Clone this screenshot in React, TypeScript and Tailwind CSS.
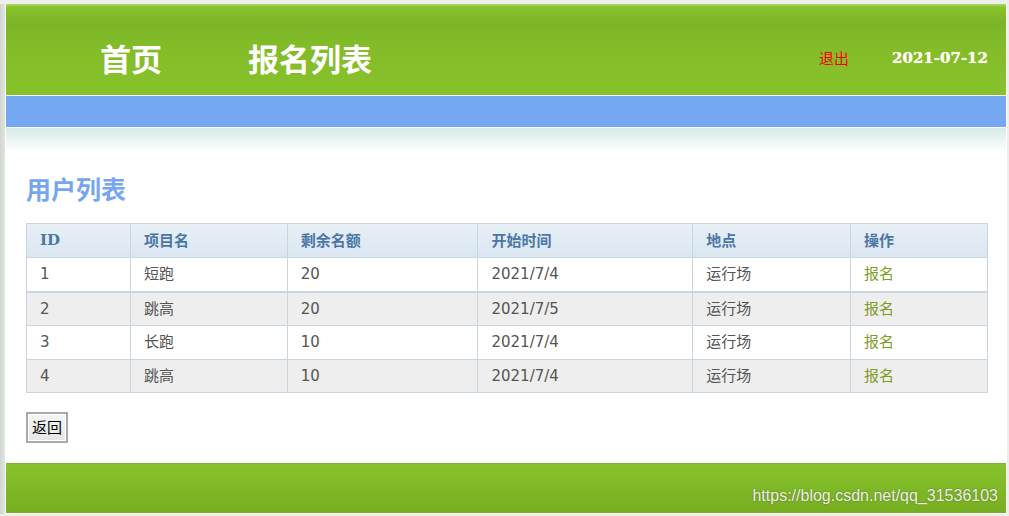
const rows = [
  { id: 1, name: "短跑", left: 20, start: "2021/7/4", place: "运行场" },
  { id: 2, name: "跳高", left: 20, start: "2021/7/5", place: "运行场" },
  { id: 3, name: "长跑", left: 10, start: "2021/7/4", place: "运行场" },
  { id: 4, name: "跳高", left: 10, start: "2021/7/4", place: "运行场" },
];

const cjk = "font-['Noto_Sans_CJK_SC',sans-serif]";
const body = "font-['DejaVu_Sans','Noto_Sans_CJK_SC',sans-serif]";

export default function App() {
  return (
    <div className="w-[1009px] h-[516px] bg-[#eeeeee] pt-[4px] pr-[2px] pb-[2px] flex overflow-hidden">
      {/* left frame */}
      <div className="w-[6px] bg-gradient-to-r from-[#cfd5cf] to-[#e2e5e1]" />
      <div className="flex-1 flex flex-col bg-white border-l border-r border-b border-white">
        {/* header */}
        <div className="h-[91px] flex items-center pt-[15px] pl-[94px] pr-[18px] bg-[linear-gradient(to_bottom,#b2d873_0px,#8ac42c_3px,#83bc29_10px,#7bb427_20px,#82bb28_38px,#88c22a_91px)]">
          <nav className={`flex items-center gap-[86px] text-white font-bold text-[31px] leading-none ${cjk}`}>
            <span>首页</span>
            <span>报名列表</span>
          </nav>
          <div className="ml-auto flex items-center gap-[43px] pt-[2px]">
            <span className={`text-[15px] text-[#ff0000] ${cjk}`}>退出</span>
            <span className="text-[15px] font-bold text-white font-['DejaVu_Serif',serif] [text-shadow:0_0_1px_#f5f0a0]">2021-07-12</span>
          </div>
        </div>
        <div className="h-[1px] bg-white" />
        <div className="h-[31px] bg-[#76a7f3]" />
        <div className="h-[1px] bg-white" />
        <div className="h-[24px] bg-gradient-to-b from-[#d7ebe8] to-white" />

        {/* content */}
        <div className="pl-[20px] pr-[18px]">
          <h2 className={`mt-[21px] h-[32px] leading-[30px] text-[25px] font-bold text-[#78a6ee] ${cjk}`}>用户列表</h2>
          <table className={`mt-[18px] w-[962px] border-collapse text-[15px] ${body}`}>
            <colgroup>
              <col className="w-[104px]" />
              <col className="w-[157px]" />
              <col className="w-[191px]" />
              <col className="w-[215px]" />
              <col className="w-[158px]" />
              <col className="w-[137px]" />
            </colgroup>
            <thead>
              <tr className="h-[34px] bg-gradient-to-b from-[#e9f0f6] to-[#dae6f1] text-[#4b77a6] font-bold">
                <th className="border border-[#c9d5e0] text-left pl-[13px] font-['DejaVu_Serif',serif]">ID</th>
                {["项目名", "剩余名额", "开始时间", "地点", "操作"].map((h) => (
                  <th key={h} className={`border border-[#c9d5e0] text-left pl-[13px] ${cjk}`}>{h}</th>
                ))}
              </tr>
            </thead>
            <tbody className="text-[#555555]">
              {rows.map((r, i) => (
                <tr
                  key={r.id}
                  className={`${i === 3 ? "h-[33px]" : "h-[34px]"} ${i % 2 === 1 ? "bg-[#eeeeee]" : "bg-white"} ${i === 1 ? "border-t-2" : ""} border-[#c9d5e0]`}
                >
                  <td className="border border-[#c9d5e0] pl-[13px]">{r.id}</td>
                  <td className="border border-[#c9d5e0] pl-[13px]">{r.name}</td>
                  <td className="border border-[#c9d5e0] pl-[13px]">{r.left}</td>
                  <td className="border border-[#c9d5e0] pl-[13px]">{r.start}</td>
                  <td className="border border-[#c9d5e0] pl-[13px]">{r.place}</td>
                  <td className="border border-[#c9d5e0] pl-[13px] text-[#7d9d1f]">报名</td>
                </tr>
              ))}
            </tbody>
          </table>
          <button
            className={`mt-[19px] w-[42px] h-[31px] text-[15px] text-black bg-gradient-to-b from-[#f6f6f6] to-[#e6e6e6] border-2 border-[#a9a9a9] outline outline-1 -outline-offset-[3px] outline-white ${cjk}`}
          >
            返回
          </button>
        </div>

        {/* footer */}
        <div className="mt-[20px] h-[50px] flex items-end justify-end pr-[8px] pb-[9px] border-t border-[#7fb52c] bg-gradient-to-b from-[#88c32c] to-[#77ae20]">
          <span className="text-[16px] leading-none text-[#ececec] font-['Liberation_Sans',Arial,sans-serif] [text-shadow:0_0_2px_rgba(60,80,20,0.6)]">
            https://blog.csdn.net/qq_31536103
          </span>
        </div>
      </div>
    </div>
  );
}
